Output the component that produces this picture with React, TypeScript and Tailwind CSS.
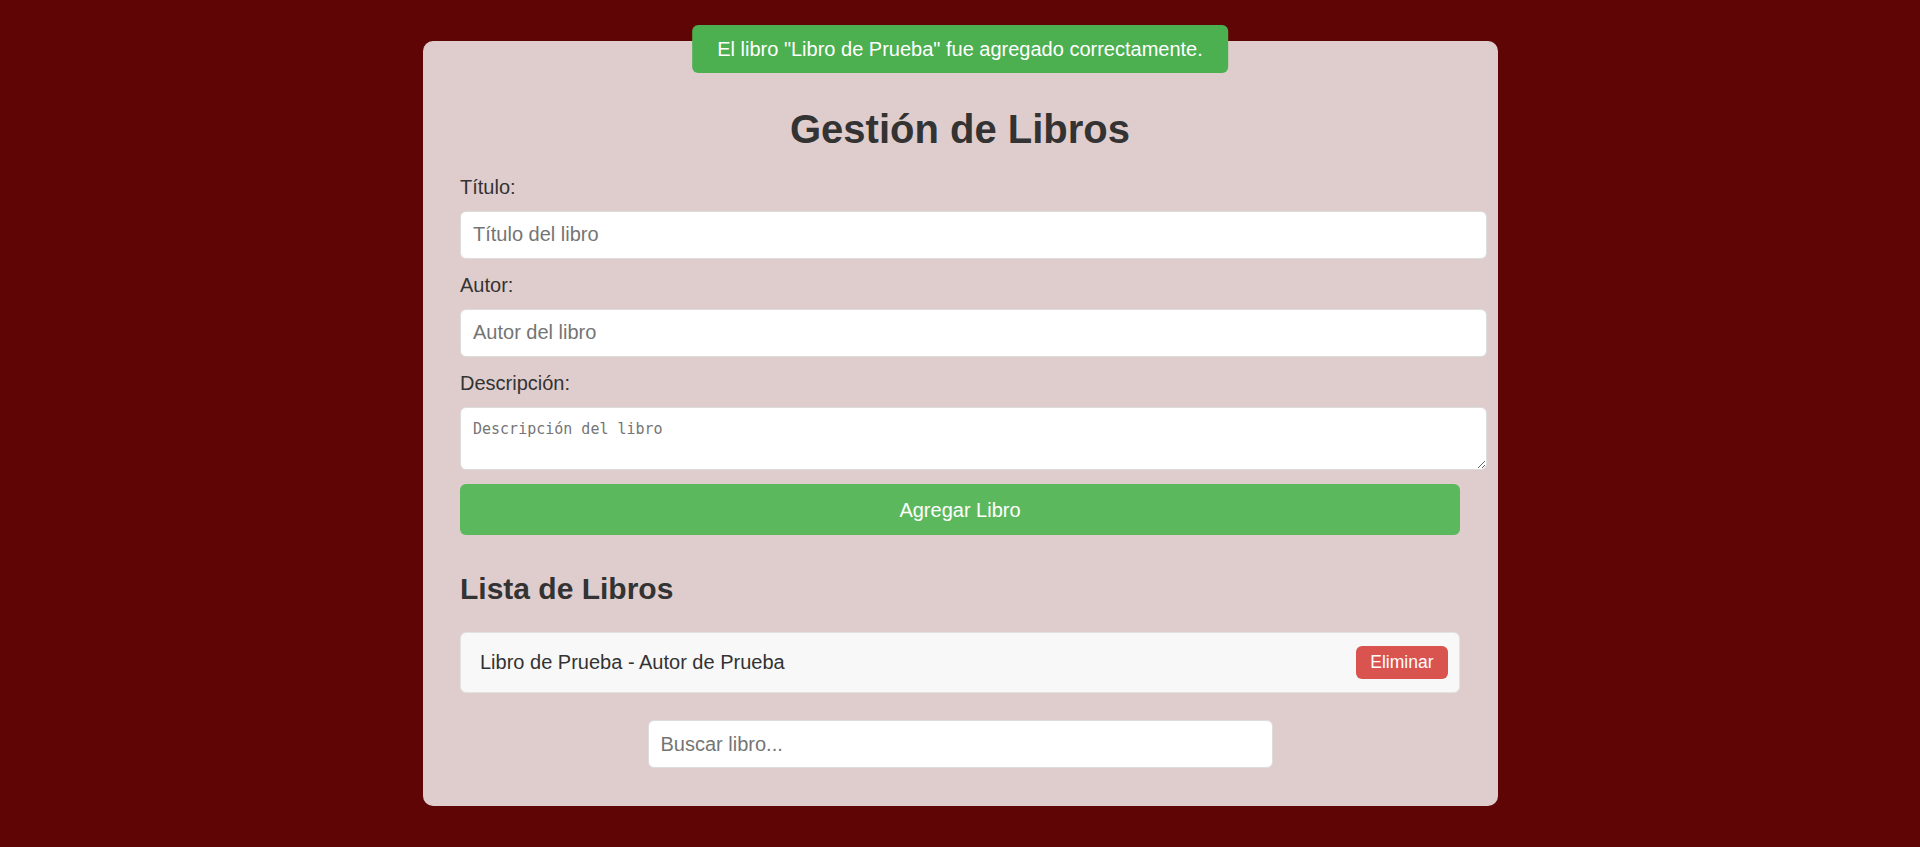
const books = [{ title: "Libro de Prueba", author: "Autor de Prueba" }];

const fieldClass =
  "block w-[1027px] h-[48px] px-[12px] bg-white border border-[#dcdcdc] rounded-[6px] text-[20px] text-[#333] placeholder:text-[#757575] outline-none";

const App = () => {
  return (
    <div className="min-h-screen bg-[#5f0505] pt-[41px] pb-[41px] font-['Liberation_Sans',Arial,sans-serif] text-[#333]">
      {/* aviso */}
      <div className="fixed top-[25px] left-1/2 -translate-x-1/2 z-10 bg-[#4caf50] text-white text-[20px] leading-[23px] px-[25px] py-[12.5px] rounded-[6px] whitespace-nowrap">
        El libro "Libro de Prueba" fue agregado correctamente.
      </div>

      <div className="w-[1075px] mx-auto bg-[#dfcdcd] rounded-[10px] px-[37.5px] pt-[37.5px] pb-[38px]">
        <h1 className="text-center text-[40px] leading-[46px] font-bold mt-[27px] mb-[24px]">
          Gestión de Libros
        </h1>

        <form>
          <label className="block text-[20px] leading-[23px] mb-[12px]">Título:</label>
          <input type="text" placeholder="Título del libro" className={`${fieldClass} mb-[15px]`} />

          <label className="block text-[20px] leading-[23px] mb-[12px]">Autor:</label>
          <input type="text" placeholder="Autor del libro" className={`${fieldClass} mb-[15px]`} />

          <label className="block text-[20px] leading-[23px] mb-[12px]">Descripción:</label>
          <textarea
            placeholder="Descripción del libro"
            className="block w-[1027px] h-[63.5px] px-[12px] py-[12px] bg-white border border-[#dcdcdc] rounded-[6px] text-[15px] leading-[18px] font-['DejaVu_Sans_Mono',monospace] placeholder:text-[#757575] outline-none mb-[14px]"
          />

          <button
            type="button"
            className="block w-full h-[51px] bg-[#5cb85c] text-white text-[20px] rounded-[6px]"
          >
            Agregar Libro
          </button>
        </form>

        <h2 className="text-[30px] leading-[34.5px] font-bold mt-[37px] mb-[25px]">Lista de Libros</h2>

        <ul>
          {books.map((book, index) => (
            <li
              key={index}
              className="flex items-center justify-between h-[61.5px] pl-[19px] pr-[11px] bg-[#f8f8f8] border border-[#e2e2e2] rounded-[6px] text-[20px]"
            >
              <span>
                {book.title} - {book.author}
              </span>
              <button
                type="button"
                className="h-[33px] px-[14.5px] bg-[#d9534f] text-white text-[17.5px] leading-[20px] rounded-[6px]"
              >
                Eliminar
              </button>
            </li>
          ))}
        </ul>

        <input
          type="text"
          placeholder="Buscar libro..."
          className="block mx-auto mt-[27px] w-[625px] h-[48px] px-[12px] bg-white border border-[#dcdcdc] rounded-[6px] text-[20px] placeholder:text-[#757575] outline-none"
        />
      </div>
    </div>
  );
};

export default App;
